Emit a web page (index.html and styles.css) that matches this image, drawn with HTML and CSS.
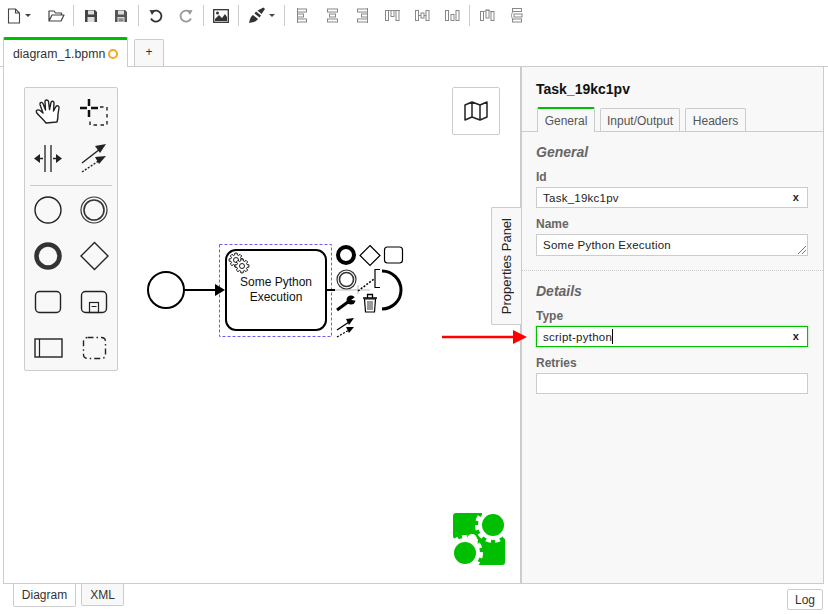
FILE: index.html
```html
<!DOCTYPE html>
<html lang="en">
<head>
    <meta charset="UTF-8">
    <title>diagram_1.bpmn</title>
    <link rel="stylesheet" href="styles.css">
</head>
<body>
    <div class="toolbar">
        <div class="tool tool-new">
            <svg width="14" height="16" viewBox="0 0 14 16"><path d="M1.500 1h7l4 4v10h-11zM8.500 1v4h4" fill="none" stroke="#444" stroke-width="1.100"/></svg>
            <span class="caret"></span>
        </div>
        <div class="tool">
            <svg width="17" height="14" viewBox="0 0 17 14"><path d="M1 12V2h5l1.500 2h6v2M1 12l3-6h12l-3 6z" fill="none" stroke="#444" stroke-width="1.200" stroke-linejoin="round"/></svg>
        </div>
        <div class="sep"></div>
        <div class="tool">
            <svg width="14" height="14" viewBox="0 0 14 14"><path d="M1 1h10l2 2v10H1z" fill="#444"/><rect x="4" y="1.500" width="6" height="4" fill="#ddd"/><rect x="3.500" y="8" width="7" height="5" fill="#ddd"/></svg>
        </div>
        <div class="tool">
            <svg width="14" height="14" viewBox="0 0 14 14"><path d="M1 1h10l2 2v10H1z" fill="#555"/><rect x="4" y="1.500" width="6" height="4" fill="#ddd"/><rect x="3.500" y="8" width="7" height="5" fill="#ddd"/><path d="M4.500 10h5M4.500 11.800h5" stroke="#555"/></svg>
        </div>
        <div class="sep"></div>
        <div class="tool">
            <svg width="16" height="16" viewBox="0 0 16 16"><path d="M4.500 3.800A5.500 5.500 0 1 1 3 10.500" fill="none" stroke="#333" stroke-width="1.800"/><path d="M1.500 2l5.500 .5-3 4.500z" fill="#333"/></svg>
        </div>
        <div class="tool">
            <svg width="16" height="16" viewBox="0 0 16 16"><path d="M11.500 3.800A5.500 5.500 0 1 0 13 10.500" fill="none" stroke="#999" stroke-width="1.800"/><path d="M14.500 2l-5.500 .5 3 4.500z" fill="#999"/></svg>
        </div>
        <div class="sep"></div>
        <div class="tool">
            <svg width="16" height="14" viewBox="0 0 16 14"><rect x="0.700" y="0.700" width="14.600" height="12.600" fill="#fff" stroke="#333" stroke-width="1.300"/><path d="M2 12V10l4-4 3 3 3-4 2 3v4z" fill="#333"/><circle cx="4.500" cy="4" r="1.500" fill="#333"/></svg>
        </div>
        <div class="sep"></div>
        <div class="tool tool-brush">
            <svg width="18" height="17" viewBox="0 0 18 17"><path d="M1 16c1-3 1-6 4-8l5 4c-2 3-5 3-9 4z" fill="#333"/><path d="M6.500 6.500l5 4 1.500-2-5-4zM9.500 3.500l4 3.500 3.500-5-1.500-1.500z" fill="#333"/></svg>
            <span class="caret"></span>
        </div>
        <div class="sep"></div>
        <div class="tool">
            <svg width="11" height="15" viewBox="0 0 11 15" class="align"><path d="M.5 0v15"/><rect x=".5" y="1" width="9" height="3"/><rect x=".5" y="6" width="6" height="3"/><rect x=".5" y="11" width="9" height="3"/></svg>
        </div>
        <div class="tool">
            <svg width="11" height="15" viewBox="0 0 11 15" class="align"><rect x=".5" y="1" width="10" height="3"/><rect x="2.500" y="6" width="6" height="3"/><rect x=".5" y="11" width="10" height="3"/></svg>
        </div>
        <div class="tool">
            <svg width="11" height="15" viewBox="0 0 11 15" class="align"><path d="M10.500 0v15"/><rect x=".5" y="1" width="10" height="3"/><rect x="4.500" y="6" width="6" height="3"/><rect x=".5" y="11" width="10" height="3"/></svg>
        </div>
        <div class="tool">
            <svg width="15" height="11" viewBox="0 0 15 11" class="align"><path d="M0 .5h15"/><rect x=".5" y=".5" width="3" height="10"/><rect x="6" y=".5" width="3" height="6"/><rect x="11" y=".5" width="3" height="10"/></svg>
        </div>
        <div class="tool">
            <svg width="15" height="11" viewBox="0 0 15 11" class="align"><rect x=".5" y=".5" width="3" height="10"/><rect x="6" y="3" width="3" height="5"/><rect x="11" y=".5" width="3" height="10"/><path d="M3.500 5.500H6M9 5.500h2"/></svg>
        </div>
        <div class="tool">
            <svg width="15" height="11" viewBox="0 0 15 11" class="align"><rect x=".5" y=".5" width="3" height="10"/><rect x="6" y="4.500" width="3" height="6"/><rect x="11" y=".5" width="3" height="10"/></svg>
        </div>
        <div class="sep"></div>
        <div class="tool">
            <svg width="15" height="13" viewBox="0 0 15 13" class="align"><rect x=".5" y="2.500" width="3" height="9"/><rect x="6" y="1" width="3" height="8"/><rect x="11" y="2.500" width="3" height="9"/><path d="M3.500 3.500c2-3 6-3 8 0"/></svg>
        </div>
        <div class="tool">
            <svg width="12" height="15" viewBox="0 0 12 15" class="align"><rect x="1.500" y=".5" width="9" height="3"/><rect x="3" y="6" width="8" height="3"/><rect x="1.500" y="11" width="9" height="3"/><path d="M2 3.500c-2 3-2 5 0 8"/></svg>
        </div>
    </div>

    <div class="tabs">
        <div class="tab tab-active">diagram_1.bpmn<span class="dirty"></span></div>
        <div class="tab tab-add">+</div>
    </div>

    <div class="main">
        <div class="canvas">
            <svg class="diagram" width="516" height="516" viewBox="0 0 516 516">
                <defs>
                    <polygon id="gear" points="6.900,-1.200 6.900,1.200 5.100,1.300 4.500,2.700 5.700,4 4,5.700 2.700,4.500 1.300,5.100 1.200,6.900 -1.200,6.900 -1.300,5.100 -2.700,4.500 -4,5.700 -5.700,4 -4.500,2.700 -5.100,1.300 -6.900,1.200 -6.900,-1.200 -5.100,-1.300 -4.500,-2.700 -5.700,-4 -4,-5.700 -2.700,-4.500 -1.300,-5.100 -1.200,-6.900 1.200,-6.900 1.300,-5.100 2.700,-4.500 4,-5.700 5.700,-4 4.500,-2.700 5.100,-1.300"/>
                </defs>
                <g transform="translate(-4 -67)">
                    <!-- selection and shapes -->
                    <rect x="219.500" y="244.500" width="112" height="92" fill="none" stroke="#6a5cf0" stroke-dasharray="3 2"/>
                    <circle cx="166" cy="290" r="18" fill="#fff" stroke="#000" stroke-width="2"/>
                    <path d="M184 290h32" stroke="#000" stroke-width="2"/>
                    <path d="M215 284l10 6-10 6z" fill="#000"/>
                    <rect x="226" y="250" width="100" height="80" rx="10" fill="#fff" stroke="#000" stroke-width="2"/>
                    <g fill="#fff" stroke="#000" stroke-width=".9">
                        <use href="#gear" x="236" y="260"/>
                        <circle cx="236" cy="260" r="2.500"/>
                        <use href="#gear" x="242" y="266"/>
                        <circle cx="242" cy="266" r="2.500"/>
                    </g>
                    <text class="task-label" x="276" y="286">Some Python</text>
                    <text class="task-label" x="276" y="301">Execution</text>

                    <!-- drag preview -->
                    <path d="M327 290h8" stroke="#000" stroke-width="2"/>
                    <path d="M335 290h35" stroke="#bbb"/>
                    <path d="M358 285v9" stroke="#bbb"/>
                    <path d="M380 269.500h-5v18h5" fill="none" stroke="#000" stroke-width="1.200"/>
                    <path d="M382 271a19 19 0 1 1 0 38" fill="none" stroke="#000" stroke-width="3"/>
                    <path d="M358 291l16-12" stroke="#000" stroke-width="1.500" stroke-dasharray="2 1.500"/>

                    <!-- context pad -->
                    <circle cx="346" cy="255" r="8" fill="none" stroke="#000" stroke-width="4"/>
                    <path d="M370 245.500l10 10-10 10-10-10z" fill="#fff" stroke="#000" stroke-width="1.200"/>
                    <rect x="384.500" y="247" width="18" height="16" rx="3" fill="#fff" stroke="#000" stroke-width="1.200"/>
                    <circle cx="346.500" cy="279.500" r="9.500" fill="none" stroke="#333" stroke-width="1.200"/>
                    <circle cx="346.500" cy="279.500" r="7" fill="none" stroke="#333" stroke-width="1.600"/>
                    <path d="M337 310l11-8" stroke="#000" stroke-width="3"/>
                    <circle cx="351" cy="300" r="4.500" fill="#000"/>
                    <path d="M351 300l7-5v6z" fill="#fff"/>
                    <g fill="#fff" stroke="#000">
                        <path d="M363 298h14M367.500 297.500v-3h5v3" stroke-width="1.300" fill="none"/>
                        <path d="M364.500 299l1 13h9l1-13z" stroke-width="1.200"/>
                        <path d="M368 301v9M370 301v9M372 301v9" stroke-width=".8"/>
                    </g>
                    <path d="M337 330l12-8" stroke="#000" stroke-width="1.300"/>
                    <path d="M354 318l-8 1 3 6z" fill="#000"/>
                    <path d="M337 337l12-7" stroke="#000" stroke-width="1.300" stroke-dasharray="2 1.500"/>
                    <path d="M354 327l-8 0 3 6z" fill="#000"/>

                    <!-- logo -->
                    <path d="M456 513h26v26h-5a5 5 0 0 0-10 0h-11a3 3 0 0 1-3-3v-20a3 3 0 0 1 3-3z" fill="#00bf00"/>
                    <path d="M478 536h27v26a3 3 0 0 1-3 3h-22a3 3 0 0 1-3-3z" fill="#00bf00"/>
                    <g fill="#fff">
                        <circle cx="493" cy="525" r="15"/>
                        <circle cx="493" cy="525" r="16" fill="none" stroke="#fff" stroke-width="4" stroke-dasharray="5 4"/>
                        <circle cx="465" cy="553" r="15"/>
                        <circle cx="465" cy="553" r="16" fill="none" stroke="#fff" stroke-width="4" stroke-dasharray="5 4"/>
                    </g>
                    <circle cx="493" cy="525" r="11" fill="#00bf00"/>
                    <circle cx="465" cy="553" r="11" fill="#00bf00"/>
                </g>
            </svg>

            <div class="palette">
                <div class="palette-grid">
                    <svg viewBox="0 0 46 46"><path d="M21 34C18 30 14 27 11.500 23.500c-1-2 1.500-3.500 3.500-2l3 2.500-3-8.500c-.5-2 2-3 3-1l2.500 6.500-.5-8.500c0-2 3-2 3.500 0l1 8 1.500-7c.5-2 3-1.500 3 .5l-.5 8 2.500-4.500c1-1.500 3.500-.5 3 1.500l-1 6c0 3 0 5-1 8z" fill="#fff" stroke="#222" stroke-width="1.400" stroke-linejoin="round"/></svg>
                    <svg viewBox="0 0 46 46"><path d="M18 10v7M18 21v7M9 19h7M20 19h7" stroke="#111" stroke-width="2.500"/><path d="M29 18h7v18H19v-6" fill="none" stroke="#222" stroke-width="1.400" stroke-dasharray="3.500 3.500"/></svg>
                    <svg viewBox="0 0 46 46"><path d="M20 10v27M26 10v27" stroke="#222" stroke-width="1.300"/><path d="M18 23.500h-4M28 23.500h4" stroke="#222" stroke-width="1.500"/><path d="M9 23.500l6-4.500v9zM37 23.500l-6-4.500v9z" fill="#222"/></svg>
                    <svg viewBox="0 0 46 46"><path d="M11 28l18-14" stroke="#222" stroke-width="1.400"/><path d="M35 9l-11 2 5 7z" fill="#222"/><path d="M11 37l18-12" stroke="#222" stroke-width="1.400" stroke-dasharray="2 1.500"/><path d="M35 21l-11 1 4 7z" fill="#222"/></svg>
                </div>
                <div class="palette-sep"></div>
                <div class="palette-grid">
                    <svg viewBox="0 0 46 46"><circle cx="23" cy="23" r="13" fill="none" stroke="#222" stroke-width="1.400"/></svg>
                    <svg viewBox="0 0 46 46"><circle cx="23" cy="23" r="13" fill="none" stroke="#333" stroke-width="1.200"/><circle cx="23" cy="23" r="10" fill="none" stroke="#333" stroke-width="1.600"/></svg>
                    <svg viewBox="0 0 46 46"><circle cx="23" cy="23" r="11.500" fill="none" stroke="#333" stroke-width="4.500"/></svg>
                    <svg viewBox="0 0 46 46"><path d="M23.500 9.500l13.500 13.500-13.500 13.500-13.500-13.500z" fill="none" stroke="#222" stroke-width="1.400"/></svg>
                    <svg viewBox="0 0 46 46"><rect x="10.500" y="12.500" width="25" height="21" rx="4" fill="none" stroke="#222" stroke-width="1.400"/></svg>
                    <svg viewBox="0 0 46 46"><rect x="10.500" y="12.500" width="25" height="21" rx="4" fill="none" stroke="#222" stroke-width="1.400"/><rect x="18.500" y="23.500" width="9" height="10" fill="none" stroke="#222" stroke-width="1.200"/><path d="M20.500 27.500h5" stroke="#222"/></svg>
                    <svg viewBox="0 0 46 46"><rect x="10" y="14" width="27" height="18" fill="none" stroke="#222" stroke-width="1.400"/><path d="M14.500 14v18" stroke="#222" stroke-width="1.200"/></svg>
                    <svg viewBox="0 0 46 46"><rect x="12.500" y="12.500" width="22" height="21" rx="4" fill="none" stroke="#222" stroke-width="1.400" stroke-dasharray="6 3 1.500 3"/></svg>
                </div>
            </div>

            <div class="minimap-toggle">
                <svg width="24" height="20" viewBox="0 0 24 20"><path d="M1 4l7-3 8 3 7-3v15l-7 3-8-3-7 3zM8 1v15M16 4v15" fill="none" stroke="#222" stroke-width="1.500" stroke-linejoin="round"/></svg>
            </div>
        </div>

        <div class="panel">
            <div class="panel-toggle"><span>Properties Panel</span></div>
            <div class="panel-title">Task_19kc1pv</div>
            <div class="panel-tabs">
                <div class="panel-tab panel-tab-active">General</div>
                <div class="panel-tab panel-tab-io">Input/Output</div>
                <div class="panel-tab panel-tab-headers">Headers</div>
            </div>
            <div class="group">
                <div class="group-title">General</div>
                <div class="label">Id</div>
                <div class="field">Task_19kc1pv<span class="clear">x</span></div>
                <div class="label">Name</div>
                <div class="field field-area">Some Python Execution
                    <svg class="grip" width="9" height="9" viewBox="0 0 9 9"><path d="M1 9l8-8M5 9l4-4" stroke="#777"/></svg>
                </div>
            </div>
            <div class="group group-details">
                <div class="group-title">Details</div>
                <div class="label">Type</div>
                <div class="field field-focus">script-python<span class="text-caret"></span><span class="clear">x</span></div>
                <div class="label">Retries</div>
                <div class="field"></div>
            </div>
        </div>

        <svg class="red-arrow" width="86" height="14" viewBox="0 0 86 14"><path d="M0 7h72" stroke="#f00" stroke-width="2.500"/><path d="M71 0l14 7-14 7z" fill="#f00"/></svg>
    </div>

    <div class="footer">
        <div class="foot-tab foot-tab-active">Diagram</div>
        <div class="foot-tab">XML</div>
        <div class="log-btn">Log</div>
    </div>
</body>
</html>
```

FILE: styles.css
```css
* {
    margin: 0;
    padding: 0;
    box-sizing: border-box;
}
body {
    width: 828px;
    height: 614px;
    overflow: hidden;
    display: flex;
    flex-direction: column;
    font-family: 'Liberation Sans', Arial, sans-serif;
    color: #333333;
    background-color: #FFFFFF;
}

/* toolbar */
.toolbar {
    height: 37px;
    display: flex;
    align-items: flex-start;
    padding-top: 5px;
}
.tool {
    width: 30px;
    height: 21px;
    display: flex;
    align-items: center;
    justify-content: center;
}
.tool-new {
    width: 41px;
    padding-right: 3px;
    gap: 4px;
}
.tool-brush {
    width: 41px;
    gap: 3px;
}
.caret {
    width: 0;
    height: 0;
    border-left: 3px solid transparent;
    border-right: 3px solid transparent;
    border-top: 3px solid #444444;
}
.sep {
    width: 1px;
    height: 21px;
    margin: 0 2px;
    background-color: #CCCCCC;
}
.align {
    fill: none;
    stroke: #888888;
}

/* file tabs */
.tabs {
    height: 30px;
    display: flex;
    align-items: flex-end;
    gap: 6px;
    padding-left: 3px;
    border-bottom: 1px solid #CCCCCC;
}
.tab {
    font-size: 12px;
    border: 1px solid #CCCCCC;
    border-bottom: none;
    border-radius: 2px 2px 0 0;
}
.tab-active {
    width: 125px;
    height: 30px;
    margin-bottom: -1px;
    padding: 7px 0 0 9px;
    border-top: 3px solid #00BF00;
    background-color: #FFFFFF;
    font-size: 12.300px;
    white-space: nowrap;
}
.tab-add {
    width: 30px;
    height: 27px;
    margin-bottom: 0;
    line-height: 25px;
    text-align: center;
    background-color: #F8F8F8;
}
.dirty {
    display: inline-block;
    width: 10px;
    height: 10px;
    margin-left: 3px;
    vertical-align: -1px;
    border: 2px solid #F5A623;
    border-radius: 50%;
}

/* canvas and panel */
.main {
    flex: 1;
    position: relative;
    display: flex;
    margin: 0 4px 0 3px;
    border-left: 1px solid #CCCCCC;
    border-bottom: 1px solid #CCCCCC;
}
.canvas {
    flex: 1;
    min-width: 0;
    position: relative;
}
.diagram {
    display: block;
}
.task-label {
    font-size: 12px;
    text-anchor: middle;
    fill: #111111;
}
.palette {
    position: absolute;
    left: 20px;
    top: 20px;
    width: 94px;
    height: 284px;
    padding-top: 1px;
    background-color: #F8F8F8;
    border: 1px solid #CCCCCC;
    border-radius: 2px;
}
.palette-grid {
    display: grid;
    grid-template-columns: 46px 46px;
    grid-auto-rows: 46px;
}
.palette-grid svg {
    display: block;
    width: 46px;
    height: 46px;
}
.palette-sep {
    height: 1px;
    margin: 4px 5px 1px;
    background-color: #CCCCCC;
}
.minimap-toggle {
    position: absolute;
    left: 448px;
    top: 20px;
    width: 48px;
    height: 48px;
    display: flex;
    align-items: center;
    justify-content: center;
    background-color: #FFFFFF;
    border: 1px solid #CCCCCC;
    border-radius: 2px;
}
.red-arrow {
    position: absolute;
    left: 438px;
    top: 263px;
}
.panel {
    width: 304px;
    flex-shrink: 0;
    position: relative;
    background-color: #F8F8F8;
    border-left: 2px solid #CCCCCC;
    border-right: 1px solid #CCCCCC;
}
.panel-toggle {
    position: absolute;
    left: -31px;
    top: 140px;
    width: 30px;
    height: 118px;
    display: flex;
    align-items: center;
    justify-content: center;
    background-color: #F8F8F8;
    border: 1px solid #CCCCCC;
    border-right: none;
    border-radius: 2px 0 0 2px;
    font-size: 13px;
    color: #222222;
}
.panel-toggle span {
    writing-mode: vertical-rl;
    transform: rotate(180deg);
    white-space: nowrap;
}
.panel-title {
    padding: 14px 0 0 14px;
    height: 40px;
    font-size: 14px;
    font-weight: 700;
    color: #111111;
}
.panel-tabs {
    height: 25px;
    display: flex;
    align-items: flex-end;
    gap: 5px;
    padding-left: 15px;
    border-bottom: 1px solid #CCCCCC;
}
.panel-tab {
    height: 23px;
    padding-top: 5px;
    text-align: center;
    font-size: 12px;
    color: #555555;
    border: 1px solid #CCCCCC;
    border-bottom: none;
    border-radius: 2px 2px 0 0;
}
.panel-tab-active {
    height: 25px;
    width: 58px;
    margin-bottom: -1px;
    padding-top: 5px;
    background-color: #F8F8F8;
    border-top: 2px solid #00BF00;
}
.panel-tab-io {
    width: 80px;
}
.panel-tab-headers {
    width: 61px;
}
.group {
    padding: 0 15px 0 14px;
    height: 139px;
    border-bottom: 1px dotted #CCCCCC;
}
.group-details {
    border-bottom: none;
}
.group-title {
    padding-top: 12px;
    height: 36px;
    font-size: 14px;
    font-weight: 700;
    font-style: italic;
    color: #666666;
}
.label {
    height: 19px;
    padding-top: 2px;
    font-size: 12px;
    font-weight: 700;
    color: #666666;
}
.field {
    height: 21px;
    position: relative;
    display: flex;
    align-items: center;
    padding-left: 6px;
    margin-bottom: 7px;
    font-size: 11.500px;
    letter-spacing: .25px;
    color: #222222;
    background-color: #FFFFFF;
    border: 1px solid #CCCCCC;
}
.field-area {
    height: 22px;
}
.field-focus {
    border-color: #00BF00;
    box-shadow: 0 0 2px rgba(0, 191, 0, 0.5);
}
.clear {
    position: absolute;
    right: 8px;
    top: 3px;
    font-size: 11px;
    font-weight: 700;
}
.text-caret {
    width: 1px;
    height: 15px;
    background-color: #000000;
}
.grip {
    position: absolute;
    right: 1px;
    bottom: 1px;
}

/* footer */
.footer {
    height: 30px;
    display: flex;
    align-items: flex-start;
    gap: 5px;
    padding-left: 13px;
}
.foot-tab {
    height: 22px;
    width: 43px;
    text-align: center;
    line-height: 22px;
    font-size: 12px;
    background-color: #F8F8F8;
    border: 1px solid #CCCCCC;
    border-top: none;
    border-radius: 0 0 2px 2px;
}
.foot-tab-active {
    width: 63px;
    height: 24px;
    margin-top: -1px;
    line-height: 24px;
    background-color: #FFFFFF;
}
.log-btn {
    width: 36px;
    height: 21px;
    margin: 5px 5px 0 auto;
    text-align: center;
    line-height: 20px;
    font-size: 12px;
    border: 1px solid #CCCCCC;
    border-radius: 2px;
}
```
